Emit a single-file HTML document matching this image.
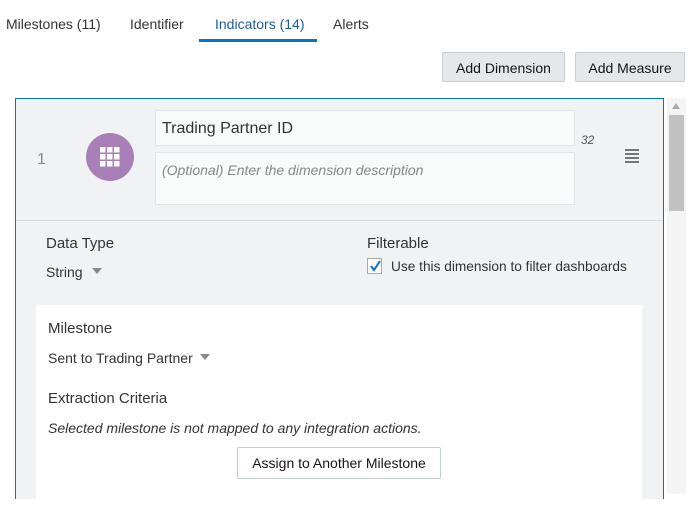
<html><head><style>
body{margin:0;width:688px;height:494px;overflow:hidden;background:#fff;font-family:"Liberation Sans",sans-serif;color:#333;position:relative}
.a{position:absolute;white-space:nowrap}
.tab{font-size:14px;top:16px;color:#333}
.btn{position:absolute;top:52px;height:30px;background:#e4e8ea;border:1px solid #c4cdd2;border-radius:2px;font-size:14px;line-height:30px;text-align:center;box-sizing:border-box;color:#161513}
</style></head><body>
<div class="a tab" style="left:6px">Milestones (11)</div>
<div class="a tab" style="left:130px">Identifier</div>
<div class="a tab" style="left:215px;color:#1f5c9e">Indicators (14)</div>
<div class="a tab" style="left:333px">Alerts</div>
<div class="a" style="left:199px;top:39px;width:118px;height:3px;background:#0572ce"></div>
<div class="btn" style="left:442px;width:123px">Add Dimension</div>
<div class="btn" style="left:575px;width:110px">Add Measure</div>
<div class="a" style="left:15px;top:98px;width:647px;height:400px;border:1px solid #0572ce;border-bottom:none;background:#f1f2f3"></div>
<div class="a" style="left:16px;top:220px;width:647px;height:1px;background:#d6dadd"></div>
<div class="a" style="left:37px;top:151px;font-size:16px;color:#888">1</div>
<div class="a" style="left:86px;top:133px;width:48px;height:48px;border-radius:50%;background:#a97fb8"></div>
<svg class="a" style="left:100px;top:147px" width="20" height="20"><g fill="#fff"><rect x="0" y="0" width="5.5" height="5.5"/><rect x="7" y="0" width="5.5" height="5.5"/><rect x="14" y="0" width="5.5" height="5.5"/><rect x="0" y="7" width="5.5" height="5.5"/><rect x="7" y="7" width="5.5" height="5.5"/><rect x="14" y="7" width="5.5" height="5.5"/><rect x="0" y="14" width="5.5" height="5.5"/><rect x="7" y="14" width="5.5" height="5.5"/><rect x="14" y="14" width="5.5" height="5.5"/></g></svg>
<div class="a" style="left:155px;top:110px;width:420px;height:36px;background:#f9fafa;border:1px solid #e3e6e8;box-sizing:border-box;font-size:16px;line-height:36px;padding-left:6px;color:#333">Trading Partner ID</div>
<div class="a" style="left:155px;top:152px;width:420px;height:53px;background:#f9fafa;border:1px solid #e3e6e8;box-sizing:border-box;font-size:14px;font-style:italic;color:#888;padding:9px 6px">(Optional) Enter the dimension description</div>
<div class="a" style="left:581px;top:133px;font-size:12px;font-style:italic;color:#555">32</div>
<svg class="a" style="left:625px;top:149px" width="14" height="14"><g fill="#777"><rect y="0" width="14" height="2"/><rect y="4" width="14" height="2"/><rect y="8" width="14" height="2"/><rect y="12" width="14" height="2"/></g></svg>
<div class="a" style="left:46px;top:235px;font-size:15px">Data Type</div>
<div class="a" style="left:46px;top:264px;font-size:14px">String</div>
<svg class="a" style="left:92px;top:268px" width="10" height="6"><path d="M0 0h10L5 6z" fill="#888"/></svg>
<div class="a" style="left:367px;top:235px;font-size:15px">Filterable</div>
<div class="a" style="left:367px;top:258px;width:15px;height:16px;border:1px solid #aaa;background:#fff;box-sizing:border-box"></div>
<svg class="a" style="left:368px;top:259px" width="14" height="14"><path d="M3 7l3 4 6-9" stroke="#0572ce" stroke-width="2" fill="none"/></svg>
<div class="a" style="left:391px;top:259px;font-size:13.7px">Use this dimension to filter dashboards</div>
<div class="a" style="left:36px;top:305px;width:606px;height:200px;background:#fff"></div>
<div class="a" style="left:48px;top:320px;font-size:15px">Milestone</div>
<div class="a" style="left:48px;top:350px;font-size:14px">Sent to Trading Partner</div>
<svg class="a" style="left:200px;top:354px" width="10" height="6"><path d="M0 0h10L5 6z" fill="#888"/></svg>
<div class="a" style="left:48px;top:390px;font-size:15px">Extraction Criteria</div>
<div class="a" style="left:48px;top:420px;font-size:14px;font-style:italic">Selected milestone is not mapped to any integration actions.</div>
<div class="a" style="left:237px;top:447px;width:204px;height:32px;border:1px solid #c4cdd2;box-sizing:border-box;border-radius:2px;font-size:14px;line-height:30px;text-align:center;color:#161513">Assign to Another Milestone</div>
<div class="a" style="left:667px;top:98px;width:19px;height:396px;background:#f4f4f4"></div>
<svg class="a" style="left:672px;top:103px" width="8" height="6"><path d="M0 6h8L4 0z" fill="#aaa"/></svg>
<div class="a" style="left:669px;top:115px;width:15px;height:96px;background:#c1c1c1"></div>
</body></html>
